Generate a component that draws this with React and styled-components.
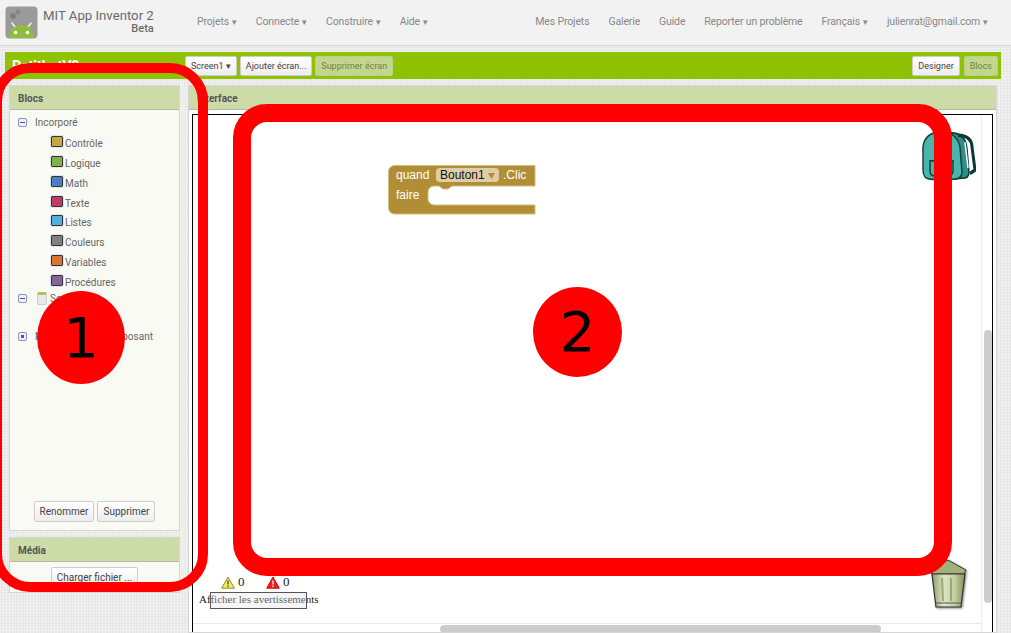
import React from 'react'
import styled, { createGlobalStyle } from 'styled-components'

const Global = createGlobalStyle`
  html, body { margin: 0; padding: 0; }
  body {
    width: 1011px;
    height: 633px;
    overflow: hidden;
    font-family: Roboto, "Liberation Sans", sans-serif;
  }
`

const Page = styled.div`
  position: relative;
  width: 1011px;
  height: 633px;
  overflow: hidden;
  display: flex;
  flex-direction: column;
  background-color: #e6e6e6;
  background-image:
    linear-gradient(90deg, rgba(255,255,255,.35) 1px, transparent 1px),
    linear-gradient(rgba(255,255,255,.35) 1px, transparent 1px);
  background-size: 3px 3px;
`

const Header = styled.header`
  height: 45px;
  flex: none;
  display: flex;
  align-items: center;
  padding: 0 23px 0 5px;
  background: #f2f2f2;
  border-bottom: 1px solid #d8d8d8;
`

const Brand = styled.div`
  display: flex;
  align-items: center;
  gap: 5px;
  width: 192px;
  flex: none;
`

const BrandText = styled.div`
  display: flex;
  flex-direction: column;
  align-items: flex-end;
  color: #6a6a6a;
  font-size: 13.2px;
  line-height: 13px;
  margin-top: -1px;
  & small {
    font-size: 11px;
    font-weight: 500;
    line-height: 14px;
  }
`

const Nav = styled.nav`
  display: flex;
  gap: 19px;
  margin-top: -2px;
  ${p => p.$end && 'margin-left: auto;'}
`

const NavItem = styled.span`
  font-size: 10.5px;
  letter-spacing: -0.15px;
  color: #888;
  white-space: nowrap;
  & i {
    font-style: normal;
    font-size: 9px;
    margin-left: 3px;
  }
`

const GreenBar = styled.div`
  flex: none;
  height: 27px;
  margin: 6px 10px 0 5px;
  background: #8fc202;
  display: flex;
  align-items: center;
  padding: 0 3px 0 7px;
`

const ProjectName = styled.div`
  width: 173px;
  color: #fff;
  font-weight: 700;
  font-size: 14px;
  flex: none;
`

const BarButtons = styled.div`
  display: flex;
  gap: 3px;
  ${p => p.$end && 'margin-left: auto; gap: 4px;'}
`

const Button = styled.button`
  font-family: inherit;
  font-size: ${p => p.$big ? '10px' : '9px'};
  height: ${p => p.$big ? '21px' : '20px'};
  padding: 0 5px;
  border-radius: 2px;
  white-space: nowrap;
  cursor: default;
  color: ${p => p.$off ? '#6d8446' : '#444'};
  border: 1px solid ${p => p.$off ? '#bccf8a' : '#ccc'};
  background: ${p => p.$off ? '#c3d68e' : 'linear-gradient(#fff, #ededed)'};
`

const Workarea = styled.div`
  flex: 1;
  min-height: 0;
  display: flex;
  gap: 3px;
  padding: 6px 14px 0 9px;
`

const LeftCol = styled.div`
  width: 171px;
  flex: none;
  display: flex;
  flex-direction: column;
  gap: 6px;
  border-right: 5px solid #eeeeea;
  height: 508px;
`

const Panel = styled.section`
  display: flex;
  flex-direction: column;
  flex: ${p => p.$grow ? 1 : 'none'};
  min-width: 0;
  background: ${p => p.$white ? '#fff' : '#f9faf4'};
  border: 1px solid #d6d6d6;
`

const PanelHead = styled.div`
  flex: none;
  height: 24px;
  line-height: 25px;
  padding-left: 8px;
  box-sizing: border-box;
  background: #cddba8;
  border-bottom: 1px solid #b5b8a6;
  color: #555;
  font-size: 10px;
  font-weight: 700;
`

const Tree = styled.div`
  flex: 1;
  padding-top: 2px;
  color: #666;
  font-size: 10px;
`

const TreeRoot = styled.div`
  display: flex;
  align-items: center;
  height: 20px;
  padding-left: 8px;
  margin-top: ${p => p.$top || 0}px;
`

const Toggle = styled.span`
  box-sizing: border-box;
  width: 9px;
  height: 9px;
  border: 1px solid #8a90c4;
  border-radius: 2px;
  background: #eef0fa;
  margin-right: 8px;
  flex: none;
  position: relative;
  &::after {
    content: '';
    position: absolute;
    left: ${p => p.$plus ? '2px' : '1px'};
    right: ${p => p.$plus ? '2px' : '1px'};
    top: ${p => p.$plus ? '2px' : '3px'};
    height: ${p => p.$plus ? '3px' : '1px'};
    background: #50559a;
  }
`

const DrawerRows = styled.div`
  padding: 1px 0 0 41px;
`

const Drawer = styled.div`
  display: flex;
  height: 19.85px;
  align-items: flex-start;
`

const Swatch = styled.span`
  box-sizing: border-box;
  width: 12px;
  height: 11px;
  flex: none;
  background: ${p => p.$c};
  border: 1px solid #333;
  outline: 1px solid #dfe3ee;
  border-radius: 1px;
  margin-top: 3px;
`

const DrawerLabel = styled.span`
  margin: 4px 0 0 2px;
  line-height: 13px;
`

const ScreenIcon = styled.span`
  box-sizing: border-box;
  width: 10px;
  height: 13px;
  margin: 0 3px 0 2px;
  border: 1px solid #ccc;
  border-top: 3px solid #a9c45c;
  border-radius: 2px;
  background: #e9e9e9;
`

const TreeActions = styled.div`
  display: flex;
  justify-content: center;
  gap: 3px;
  padding-bottom: 8px;
`

const MediaBody = styled.div`
  box-sizing: border-box;
  height: 30px;
  padding-top: 5px;
  display: flex;
  justify-content: center;
`

const RightCol = styled.div`
  flex: 1;
  min-width: 0;
  display: flex;
`

const Workspace = styled.div`
  position: relative;
  flex: 1;
  margin: 4px 3px 0 3px;
  border: 1px solid #000;
  border-bottom: none;
  overflow: hidden;
  background: #fff;
`

const Gutter = styled.div`
  position: absolute;
  right: 0;
  top: 0;
  bottom: 0;
  width: 10px;
  border-left: 1px solid #eee;
`

const VThumb = styled.div`
  position: absolute;
  left: 791px;
  top: 215px;
  width: 8px;
  height: 273px;
  border-radius: 4px;
  background: #ccc;
`

const HLine = styled.div`
  position: absolute;
  left: 0;
  right: 10px;
  top: 508px;
  height: 1px;
  background: #e8e8e8;
`

const HThumb = styled.div`
  position: absolute;
  left: 247px;
  top: 510px;
  width: 441px;
  height: 8px;
  border-radius: 4px;
  background: #ccc;
`

const BlockSvg = styled.svg`
  position: absolute;
  left: 195px;
  top: 50px;
`

const Backpack = styled.svg`
  position: absolute;
  left: 727px;
  top: 11px;
`

const Trash = styled.svg`
  position: absolute;
  left: 733px;
  top: 443px;
  filter: drop-shadow(1px 1px 1px rgba(0,0,0,.45));
`

const WarnRow = styled.div`
  position: absolute;
  left: 28px;
  top: 459px;
  display: flex;
  align-items: center;
  font-family: "Liberation Serif", serif;
  font-size: 13px;
  color: #222;
  & span { display: flex; align-items: center; gap: 3px; width: 45px; }
`

const WarnToggle = styled.div`
  position: absolute;
  left: 6px;
  top: 478px;
  font-family: "Liberation Serif", serif;
  font-size: 11px;
  color: #222;
  white-space: nowrap;
  &::before {
    content: '';
    position: absolute;
    left: 11px;
    top: -1px;
    width: 95px;
    height: 15px;
    border: 1.5px solid #555;
    background: rgba(225,225,225,.35);
  }
`

const Ring = styled.div`
  position: absolute;
  box-sizing: border-box;
  left: ${p => p.$x}px;
  top: ${p => p.$y}px;
  width: ${p => p.$w}px;
  height: ${p => p.$h}px;
  border: ${p => p.$b}px solid #f00;
  border-radius: ${p => p.$r}px;
`

const Disc = styled.div`
  position: absolute;
  left: ${p => p.$x}px;
  top: ${p => p.$y}px;
  width: ${p => p.$w}px;
  height: ${p => p.$h}px;
  border-radius: 50%;
  background: #f00;
  color: #000;
  font-family: "DejaVu Sans", sans-serif;
  font-size: 56px;
  line-height: ${p => p.$h}px;
  text-align: center;
`

const drawers = [
  ['Contrôle', '#c9a640'],
  ['Logique', '#84b046'],
  ['Math', '#4a7fc0'],
  ['Texte', '#c03a6a'],
  ['Listes', '#4fb0dc'],
  ['Couleurs', '#808080'],
  ['Variables', '#dc7332'],
  ['Procédures', '#8a6496'],
]

const Logo = () => (
  <svg width="33" height="33" viewBox="0 0 33 33">
    <rect x="0.5" y="0.5" width="32" height="32" rx="4" fill="#9a9a9a" />
    <circle cx="8" cy="10" r="3" fill="#808080" />
    <circle cx="13" cy="6" r="2.5" fill="#878787" />
    <path d="M10 21 L7 17 M23 21 L26 17" stroke="#eef2e2" strokeWidth="1.6" strokeLinecap="round" />
    <path d="M3.5 32 C4 24 10 19 16.5 19 C23 19 29 24 29.5 32 Z" fill="#8fbc3c" />
    <circle cx="10.5" cy="26.5" r="1.8" fill="#fff" />
    <circle cx="22.5" cy="26.5" r="1.8" fill="#fff" />
  </svg>
)

const EventBlock = () => (
  <BlockSvg width="150" height="52" viewBox="0 0 150 52">
    <path
      d="M0.5 6.5 a6 6 0 0 1 6 -6 H147 V21 H64 l-4 3 h-5 l-4 -3 H46 a6 6 0 0 0 -6 6 V34 a6 6 0 0 0 6 6 H147 V49 H6.5 a6 6 0 0 1 -6 -6 Z"
      fill="#b18e35"
      stroke="#d2bb80"
      strokeWidth="1"
    />
    <text x="8" y="14" fontFamily="Liberation Sans, sans-serif" fontSize="12" fill="#fff">quand</text>
    <rect x="48" y="3" width="63" height="14" rx="4" fill="#dccfa8" />
    <text x="52" y="14" fontFamily="Liberation Sans, sans-serif" fontSize="12" fill="#111">Bouton1</text>
    <path d="M100 8 h7 l-3.5 6 Z" fill="#b18e35" />
    <text x="115" y="14" fontFamily="Liberation Sans, sans-serif" fontSize="12" fill="#fff">.Clic</text>
    <text x="8" y="34" fontFamily="Liberation Sans, sans-serif" fontSize="12" fill="#fff">faire</text>
  </BlockSvg>
)

const BackpackIcon = () => (
  <Backpack width="56" height="65" viewBox="0 0 56 56" preserveAspectRatio="none">
    <path d="M31 6 C40 6 46 10 47 20 L49 40 C49 44 46 45 42 45 L30 46 Z" fill="#2f8f86" stroke="#0c3a36" strokeWidth="1.5" />
    <path d="M38 8 C47 8 52 12 52 18 L55 38 L50 41" fill="none" stroke="#0c3a36" strokeWidth="3" />
    <path d="M45 14 L48 36" stroke="#fff" strokeWidth="1.5" />
    <path d="M3 18 C4 9 12 5 20 5 C30 5 38 9 40 18 L42 40 C42 44 38 46 32 46 H12 C6 46 3 44 3 38 Z" fill="#4bb5ab" stroke="#17423e" strokeWidth="1.5" />
    <path d="M10 30 H33 V39 C33 42 30 43 28 43 H14 C11 43 10 41 10 38 Z" fill="#4bb5ab" stroke="#17423e" strokeWidth="1.5" />
    <path d="M19 30 V36 M25 30 V36" stroke="#17423e" strokeWidth="1.5" />
  </Backpack>
)

const TrashIcon = () => (
  <Trash width="44" height="52" viewBox="0 0 44 52">
    <defs>
      <linearGradient id="can" x1="0" x2="1" y1="0" y2="0">
        <stop offset="0" stopColor="#8e9c62" />
        <stop offset=".35" stopColor="#dfe5c4" />
        <stop offset=".7" stopColor="#c3cda0" />
        <stop offset="1" stopColor="#7f8e54" />
      </linearGradient>
    </defs>
    <path d="M4 14 L22 2 L40 12 L38 16 H6 Z" fill="#a3b07a" stroke="#333" strokeWidth="1" />
    <path d="M6 16 H39 L35 49 H10 Z" fill="url(#can)" stroke="#333" strokeWidth="1.2" />
    <path d="M16 20 L17 43 M25 20 V43" stroke="#9aa877" strokeWidth="2" />
    <path d="M10 45 H35" stroke="#555" strokeWidth="1" />
  </Trash>
)

const WarnIcon = ({ fill, stroke }) => (
  <svg width="14" height="13" viewBox="0 0 14 13">
    <path d="M7 1 L13.3 12.2 H0.7 Z" fill={fill} stroke={stroke} strokeWidth="1" strokeLinejoin="round" />
    <path d="M7 4.5 V8.5 M7 9.6 V11" stroke={stroke === '#d00' ? '#fff' : '#444'} strokeWidth="1.3" />
  </svg>
)

const App = () => {
  return (
    <>
      <Global />
      <Page>
        <Header>
          <Brand>
            <Logo />
            <BrandText>
              MIT App Inventor 2
              <small>Beta</small>
            </BrandText>
          </Brand>
          <Nav>
            <NavItem>Projets<i>▾</i></NavItem>
            <NavItem>Connecte<i>▾</i></NavItem>
            <NavItem>Construire<i>▾</i></NavItem>
            <NavItem>Aide<i>▾</i></NavItem>
          </Nav>
          <Nav $end>
            <NavItem>Mes Projets</NavItem>
            <NavItem>Galerie</NavItem>
            <NavItem>Guide</NavItem>
            <NavItem>Reporter un problème</NavItem>
            <NavItem>Français<i>▾</i></NavItem>
            <NavItem>julienrat@gmail.com<i>▾</i></NavItem>
          </Nav>
        </Header>

        <GreenBar>
          <ProjectName>PetitbotV2</ProjectName>
          <BarButtons>
            <Button>Screen1 ▾</Button>
            <Button>Ajouter écran...</Button>
            <Button $off>Supprimer écran</Button>
          </BarButtons>
          <BarButtons $end>
            <Button>Designer</Button>
            <Button $off>Blocs</Button>
          </BarButtons>
        </GreenBar>

        <Workarea>
          <LeftCol>
            <Panel $grow>
              <PanelHead>Blocs</PanelHead>
              <Tree>
                <TreeRoot><Toggle />Incorporé</TreeRoot>
                <DrawerRows>
                  {drawers.map(([name, color]) => (
                    <Drawer key={name}>
                      <Swatch $c={color} />
                      <DrawerLabel>{name}</DrawerLabel>
                    </Drawer>
                  ))}
                </DrawerRows>
                <TreeRoot $top={-3}><Toggle /><ScreenIcon />Screen1</TreeRoot>
                <TreeRoot $top={18}><Toggle $plus />N'importe quel composant</TreeRoot>
              </Tree>
              <TreeActions>
                <Button $big>Renommer</Button>
                <Button $big>Supprimer</Button>
              </TreeActions>
            </Panel>
            <Panel>
              <PanelHead>Média</PanelHead>
              <MediaBody>
                <Button $big>Charger fichier ...</Button>
              </MediaBody>
            </Panel>
          </LeftCol>

          <RightCol>
            <Panel $grow $white>
              <PanelHead>Interface</PanelHead>
              <Workspace>
                <Gutter />
                <VThumb />
                <HLine />
                <HThumb />
                <EventBlock />
                <BackpackIcon />
                <TrashIcon />
                <WarnRow>
                  <span><WarnIcon fill="#f4ec5a" stroke="#8a8a30" /> 0</span>
                  <span><WarnIcon fill="#e62020" stroke="#d00" /> 0</span>
                </WarnRow>
                <WarnToggle>Afficher les avertissements</WarnToggle>
              </Workspace>
            </Panel>
          </RightCol>
        </Workarea>

        <Ring $x={-8} $y={63} $w={216} $h={529} $b={10} $r={38} />
        <Ring $x={233} $y={104} $w={719} $h={472} $b={18} $r={34} />
        <Disc $x={37} $y={291} $w={88} $h={93}>1</Disc>
        <Disc $x={533} $y={287} $w={89} $h={90}>2</Disc>
      </Page>
    </>
  )
}

export default App
